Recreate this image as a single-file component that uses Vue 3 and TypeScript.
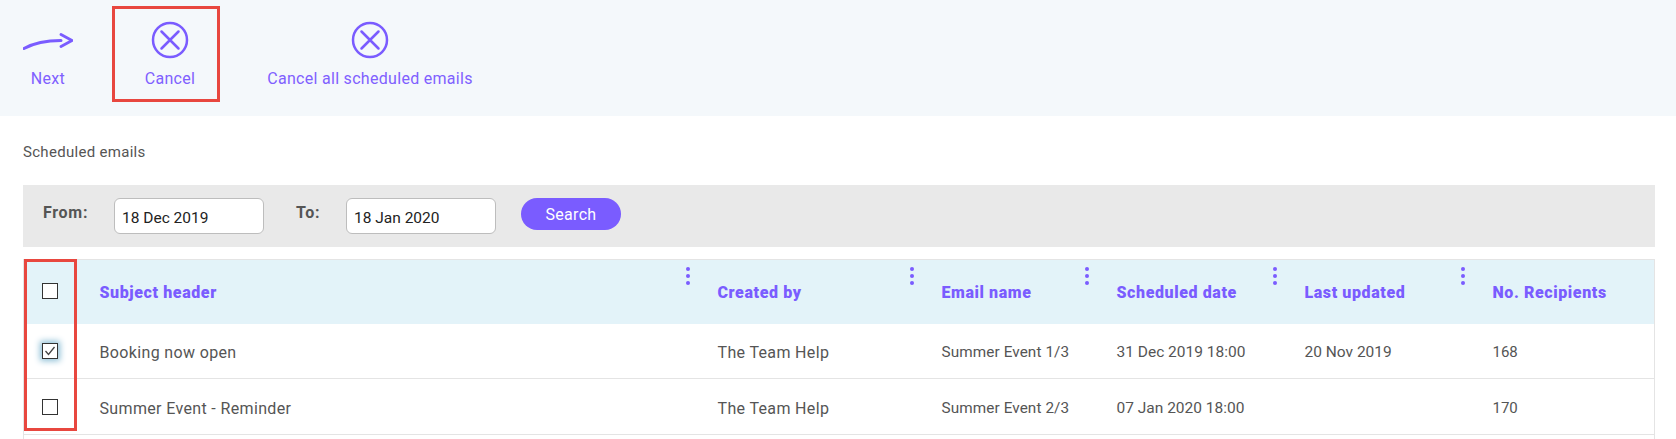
<script setup lang="ts">
interface Row { subject: string; by: string; email: string; date: string; updated: string; count: string; checked: boolean }
const columns: string[] = ['Subject header', 'Created by', 'Email name', 'Scheduled date', 'Last updated', 'No. Recipients']
const rows: Row[] = [
  { subject: 'Booking now open', by: 'The Team Help', email: 'Summer Event 1/3', date: '31 Dec 2019 18:00', updated: '20 Nov 2019', count: '168', checked: true },
  { subject: 'Summer Event - Reminder', by: 'The Team Help', email: 'Summer Event 2/3', date: '07 Jan 2020 18:00', updated: '', count: '170', checked: false },
]
</script>

<template>
  <div class="page">
    <nav class="toolbar">
      <a class="tool tool-next">
        <svg class="icon" width="50" height="40" viewBox="0 0 50 40" fill="none">
          <path d="M1 28.500C10 23.500 22 20.500 38 20.500" stroke="#7a5cff" stroke-width="3" stroke-linecap="round" />
          <path d="M38 14.500L49 20.500L38 26.500" stroke="#7a5cff" stroke-width="2.800" stroke-linecap="round" stroke-linejoin="round" />
        </svg>
        <span>Next</span>
      </a>
      <a class="tool tool-cancel">
        <svg class="icon" width="40" height="40" viewBox="0 0 40 40" fill="none">
          <circle cx="20" cy="20" r="17" stroke="#7a5cff" stroke-width="2.500" />
          <path d="M11.500 11.500L28.500 28.500M28.500 11.500L11.500 28.500" stroke="#7a5cff" stroke-width="2.500" stroke-linecap="round" />
        </svg>
        <span>Cancel</span>
      </a>
      <a class="tool tool-all">
        <svg class="icon" width="40" height="40" viewBox="0 0 40 40" fill="none">
          <circle cx="20" cy="20" r="17" stroke="#7a5cff" stroke-width="2.500" />
          <path d="M11.500 11.500L28.500 28.500M28.500 11.500L11.500 28.500" stroke="#7a5cff" stroke-width="2.500" stroke-linecap="round" />
        </svg>
        <span>Cancel all scheduled emails</span>
      </a>
    </nav>

    <main class="content">
      <h2 class="title">Scheduled emails</h2>

      <form class="filters" @submit.prevent>
        <label class="label label-from">From:</label>
        <input class="date" value="18 Dec 2019" />
        <label class="label label-to">To:</label>
        <input class="date" value="18 Jan 2020" />
        <button class="search" type="button">Search</button>
      </form>

      <div class="table-wrap">
        <table class="grid">
          <colgroup>
            <col class="c0" /><col class="c1" /><col class="c2" /><col class="c3" /><col class="c4" /><col class="c5" /><col />
          </colgroup>
          <thead>
            <tr>
              <th class="check"><span class="box"></span></th>
              <th v-for="(c, i) in columns" :key="c">
                {{ c }}
                <span v-if="i < 5" class="dots"><i></i><i></i><i></i></span>
              </th>
            </tr>
          </thead>
          <tbody>
            <tr v-for="r in rows" :key="r.subject">
              <td class="check">
                <span class="box" :class="{ on: r.checked }">
                  <svg v-if="r.checked" width="14" height="14" viewBox="0 0 14 14" fill="none">
                    <path d="M2.500 7L5.500 10.500L11.500 3" stroke="#444" stroke-width="1.300" />
                  </svg>
                </span>
              </td>
              <td>{{ r.subject }}</td>
              <td>{{ r.by }}</td>
              <td class="email">{{ r.email }}</td>
              <td class="tight">{{ r.date }}</td>
              <td class="tight">{{ r.updated }}</td>
              <td class="num">{{ r.count }}</td>
            </tr>
            <tr class="filler"><td colspan="7"></td></tr>
          </tbody>
        </table>
        <div class="highlight"></div>
      </div>
    </main>
  </div>
</template>

<style>
html, body { margin: 0; background: #fff; }
</style>

<style scoped>
.page {
  height: 439px;
  overflow: hidden;
  font-family: Roboto, "Liberation Sans", sans-serif;
  background: #fff;
}
.toolbar {
  display: flex;
  align-items: flex-start;
  box-sizing: border-box;
  height: 116px;
  padding: 6px 0 0 23px;
  background: #f4f8fb;
}
.tool {
  display: flex;
  flex-direction: column;
  align-items: center;
  box-sizing: border-box;
  height: 96px;
  padding-top: 14px;
  color: #7f60ff;
  font-size: 16px;
  letter-spacing: 0.3px;
}
.tool span { margin-top: 9px; line-height: 20px; }
.tool-next { width: 50px; }
.tool-cancel {
  width: 108px;
  margin-left: 39px;
  border: 3px solid #e8473f;
  padding: 11px 0 0 8px;
}
.tool-all { margin-left: 47px; width: 206px; white-space: nowrap; }
.content { padding: 0 21px 0 23px; }
.title {
  margin: 27px 0 0;
  font-size: 15px;
  line-height: 18px;
  font-weight: 400;
  letter-spacing: 0.3px;
  color: #555;
}
.filters {
  display: flex;
  align-items: flex-start;
  box-sizing: border-box;
  height: 62px;
  margin-top: 24px;
  padding: 14px 0 0 20px;
  background: #e9e9e9;
}
.label {
  font-size: 16px;
  font-weight: 700;
  line-height: 28px;
  letter-spacing: 0.7px;
  color: #555;
}
.label-from { width: 71px; }
.label-to { width: 50px; margin-left: 32px; }
.date {
  box-sizing: border-box;
  width: 150px;
  height: 36px;
  margin-top: -1px;
  padding: 3px 7px 0;
  border: 1px solid #bdbdbd;
  border-radius: 6px;
  background: #fff;
  font: 400 15.500px Roboto, sans-serif;
  color: #222;
  outline: none;
}
.search {
  width: 100px;
  height: 32px;
  margin-top: -1px;
  margin-left: 25px;
  border: 0;
  border-radius: 16px;
  background: #7a5cff;
  color: #fff;
  font: 400 16px Roboto, sans-serif;
  letter-spacing: 0.3px;
}
.table-wrap { position: relative; margin-top: 12px; }
.grid {
  width: 100%;
  table-layout: fixed;
  border-collapse: collapse;
  border: 1px solid #e4e4e4;
  border-bottom: 0;
  font-size: 16px;
  color: #555;
  letter-spacing: 0.35px;
}
.c0 { width: 76px; }
.c1 { width: 618px; }
.c2 { width: 224px; }
.c3 { width: 175px; }
.c4 { width: 188px; }
.c5 { width: 188px; }
thead tr { height: 64px; background: #e3f3f9; }
th {
  position: relative;
  padding: 1px 0 0;
  text-align: left;
  font-weight: 900;
  letter-spacing: 0.6px;
  color: #7a5cff;
  white-space: nowrap;
}
td {
  padding: 3px 0 0;
  height: 51px;
  border-bottom: 1px solid #e4e4e4;
  white-space: nowrap;
}
tbody tr:nth-child(2) td { padding-top: 4px; }
td.email { font-size: 15.300px; letter-spacing: 0.1px; }
td.tight { font-size: 15.500px; letter-spacing: 0; }
td.num { font-size: 15px; letter-spacing: 0; }
td.check { padding: 0 0 0 18px; height: 54px; }
tbody tr:nth-child(2) td.check { padding: 1px 0 0 18px; }
th.check { padding: 0 0 2px 18px; }
.filler td { border-bottom: 0; height: 20px; }
.box {
  display: flex;
  box-sizing: border-box;
  width: 16px;
  height: 16px;
  align-items: center;
  justify-content: center;
  border: 1px solid #333;
  background: #fff;
}
.box.on { box-shadow: 0 0 6px 2px #8ebfd6; }
.dots {
  position: absolute;
  top: 7px;
  right: 28px;
  display: flex;
  flex-direction: column;
  gap: 3px;
}
.dots i {
  display: block;
  width: 4px;
  height: 4px;
  border-radius: 50%;
  background: #7a5cff;
}
.highlight {
  position: absolute;
  left: 1px;
  top: 0;
  width: 53px;
  height: 172px;
  box-sizing: border-box;
  border: 3px solid #e8473f;
}
</style>
